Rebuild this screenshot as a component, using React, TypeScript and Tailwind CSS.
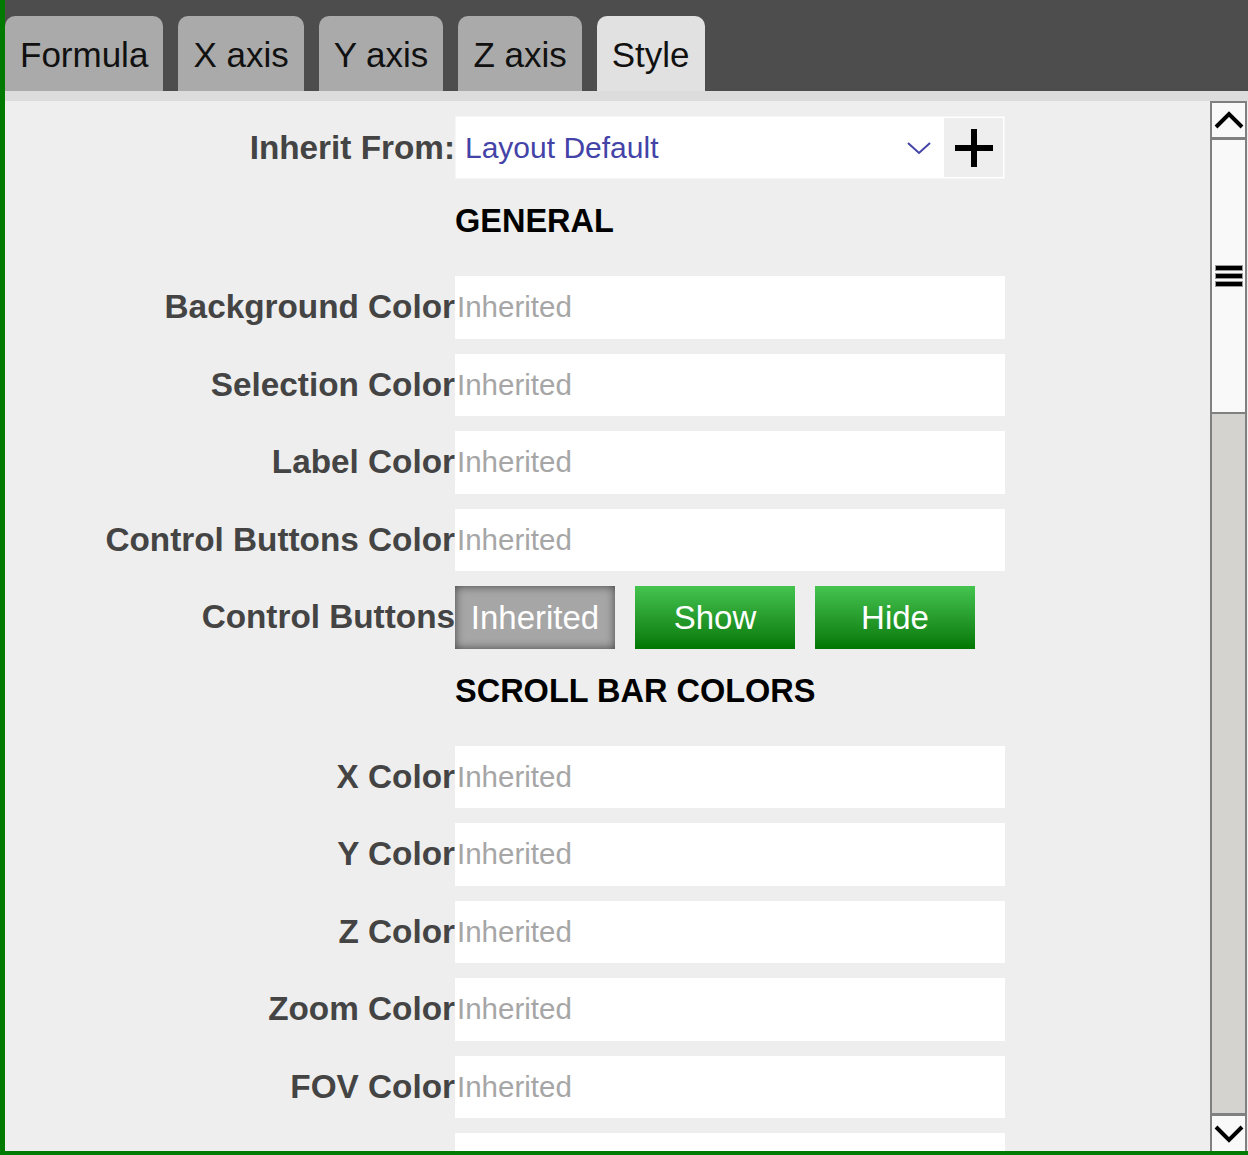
const tabs = ["Formula", "X axis", "Y axis", "Z axis", "Style"];

const generalRows = [
  "Background Color",
  "Selection Color",
  "Label Color",
  "Control Buttons Color",
];

const scrollRows = ["X Color", "Y Color", "Z Color", "Zoom Color", "FOV Color"];

const Label = ({ text }: { text: string }) => (
  <div className="flex items-center justify-end text-[33.3px] font-bold text-[#444444] whitespace-nowrap">
    {text}
  </div>
);

const ColorRow = ({ label }: { label: string }) => (
  <>
    <Label text={label} />
    <div className="flex h-[62.5px] items-center bg-white pl-[2px] text-[29.5px] text-[#a6a6a6]">
      Inherited
    </div>
  </>
);

const Heading = ({ text }: { text: string }) => (
  <>
    <div />
    <div className="flex h-[67px] items-center pb-[12px] text-[32.5px] font-bold text-black whitespace-nowrap">
      {text}
    </div>
  </>
);

const Chevron = ({ up }: { up?: boolean }) => (
  <svg width="30" height="20" viewBox="0 0 30 20">
    <polyline
      points={up ? "2,17 15,4 28,17" : "2,3 15,16 28,3"}
      fill="none"
      stroke="black"
      strokeWidth="4"
    />
  </svg>
);

export default function App() {
  return (
    <div className="flex h-[1155px] w-[1248px] flex-col overflow-hidden border-b-4 border-l-[5px] border-[#007a00] bg-[#4d4d4d] font-['Liberation_Sans',Arial,sans-serif]">
      {/* tab bar */}
      <div className="flex h-[91px] shrink-0 items-end gap-[15px]">
        {tabs.map((t) => (
          <div
            key={t}
            className={`flex h-[75px] items-center rounded-t-[10px] px-[15px] pt-[3px] text-[35px] text-[#111] ${
              t === "Style" ? "bg-[#e1e1e1]" : "bg-[#aaaaaa]"
            }`}>
            {t}
          </div>
        ))}
      </div>
      <div className="h-[10px] shrink-0 bg-[#dcdcdc]" />

      <div className="flex min-h-0 flex-1 bg-[#eeeeee]">
        {/* form */}
        <div className="min-w-0 flex-1 overflow-hidden pt-[15px]">
          <div className="grid grid-cols-[450px_550px] gap-y-[15px]">
            <Label text="Inherit From:" />
            <div className="flex h-[63px] items-center border border-[#f6f6f6] bg-white">
              <span className="flex-1 pl-[9px] text-[30px] text-[#4343a8]">Layout Default</span>
              <svg width="26" height="16" viewBox="0 0 26 16" className="mr-[12px]">
                <polyline points="2,3 13,13 24,3" fill="none" stroke="#4343a8" strokeWidth="2" />
              </svg>
              <div className="mr-[1px] flex h-[59px] w-[59px] items-center justify-center bg-[#eeeeee]">
                <svg width="40" height="40" viewBox="0 0 40 40">
                  <rect x="17" y="1" width="6" height="38" fill="black" />
                  <rect x="1" y="17" width="38" height="6" fill="black" />
                </svg>
              </div>
            </div>

            <Heading text="GENERAL" />
            {generalRows.map((r) => (
              <ColorRow key={r} label={r} />
            ))}

            <Label text="Control Buttons" />
            <div className="flex h-[62.5px] gap-[20px] text-[33px] text-white">
              <div className="flex w-[160px] items-center justify-center bg-[#a6a6a6] shadow-[inset_0_0_10px_rgba(0,0,0,0.6)]">
                Inherited
              </div>
              <div className="flex w-[160px] items-center justify-center bg-gradient-to-b from-[#44c44f] to-[#007700]">
                Show
              </div>
              <div className="flex w-[160px] items-center justify-center bg-gradient-to-b from-[#44c44f] to-[#007700]">
                Hide
              </div>
            </div>

            <Heading text="SCROLL BAR COLORS" />
            {scrollRows.map((r) => (
              <ColorRow key={r} label={r} />
            ))}
            <div />
            <div className="h-[62.5px] bg-white" />
          </div>
        </div>

        {/* scrollbar */}
        <div className="mr-[1px] flex w-[37px] shrink-0 flex-col border-x-2 border-t-2 border-[#808080] bg-[#d4d3d0]">
          <div className="flex h-[37px] shrink-0 items-center justify-center border-b-[3px] border-[#808080] bg-[#f9f9f9]">
            <Chevron up />
          </div>
          <div className="flex h-[274px] shrink-0 flex-col items-center justify-center gap-[4px] border-b-2 border-[#808080] bg-[#f9f9f9]">
            <div className="h-[4px] w-[26px] bg-black outline outline-1 outline-[#999]" />
            <div className="h-[4px] w-[26px] bg-black outline outline-1 outline-[#999]" />
            <div className="h-[4px] w-[26px] bg-black outline outline-1 outline-[#999]" />
          </div>
          <div className="flex-1" />
          <div className="flex h-[38px] shrink-0 items-center justify-center border-t-[3px] border-[#808080] bg-[#f9f9f9]">
            <Chevron />
          </div>
        </div>
      </div>
    </div>
  );
}
